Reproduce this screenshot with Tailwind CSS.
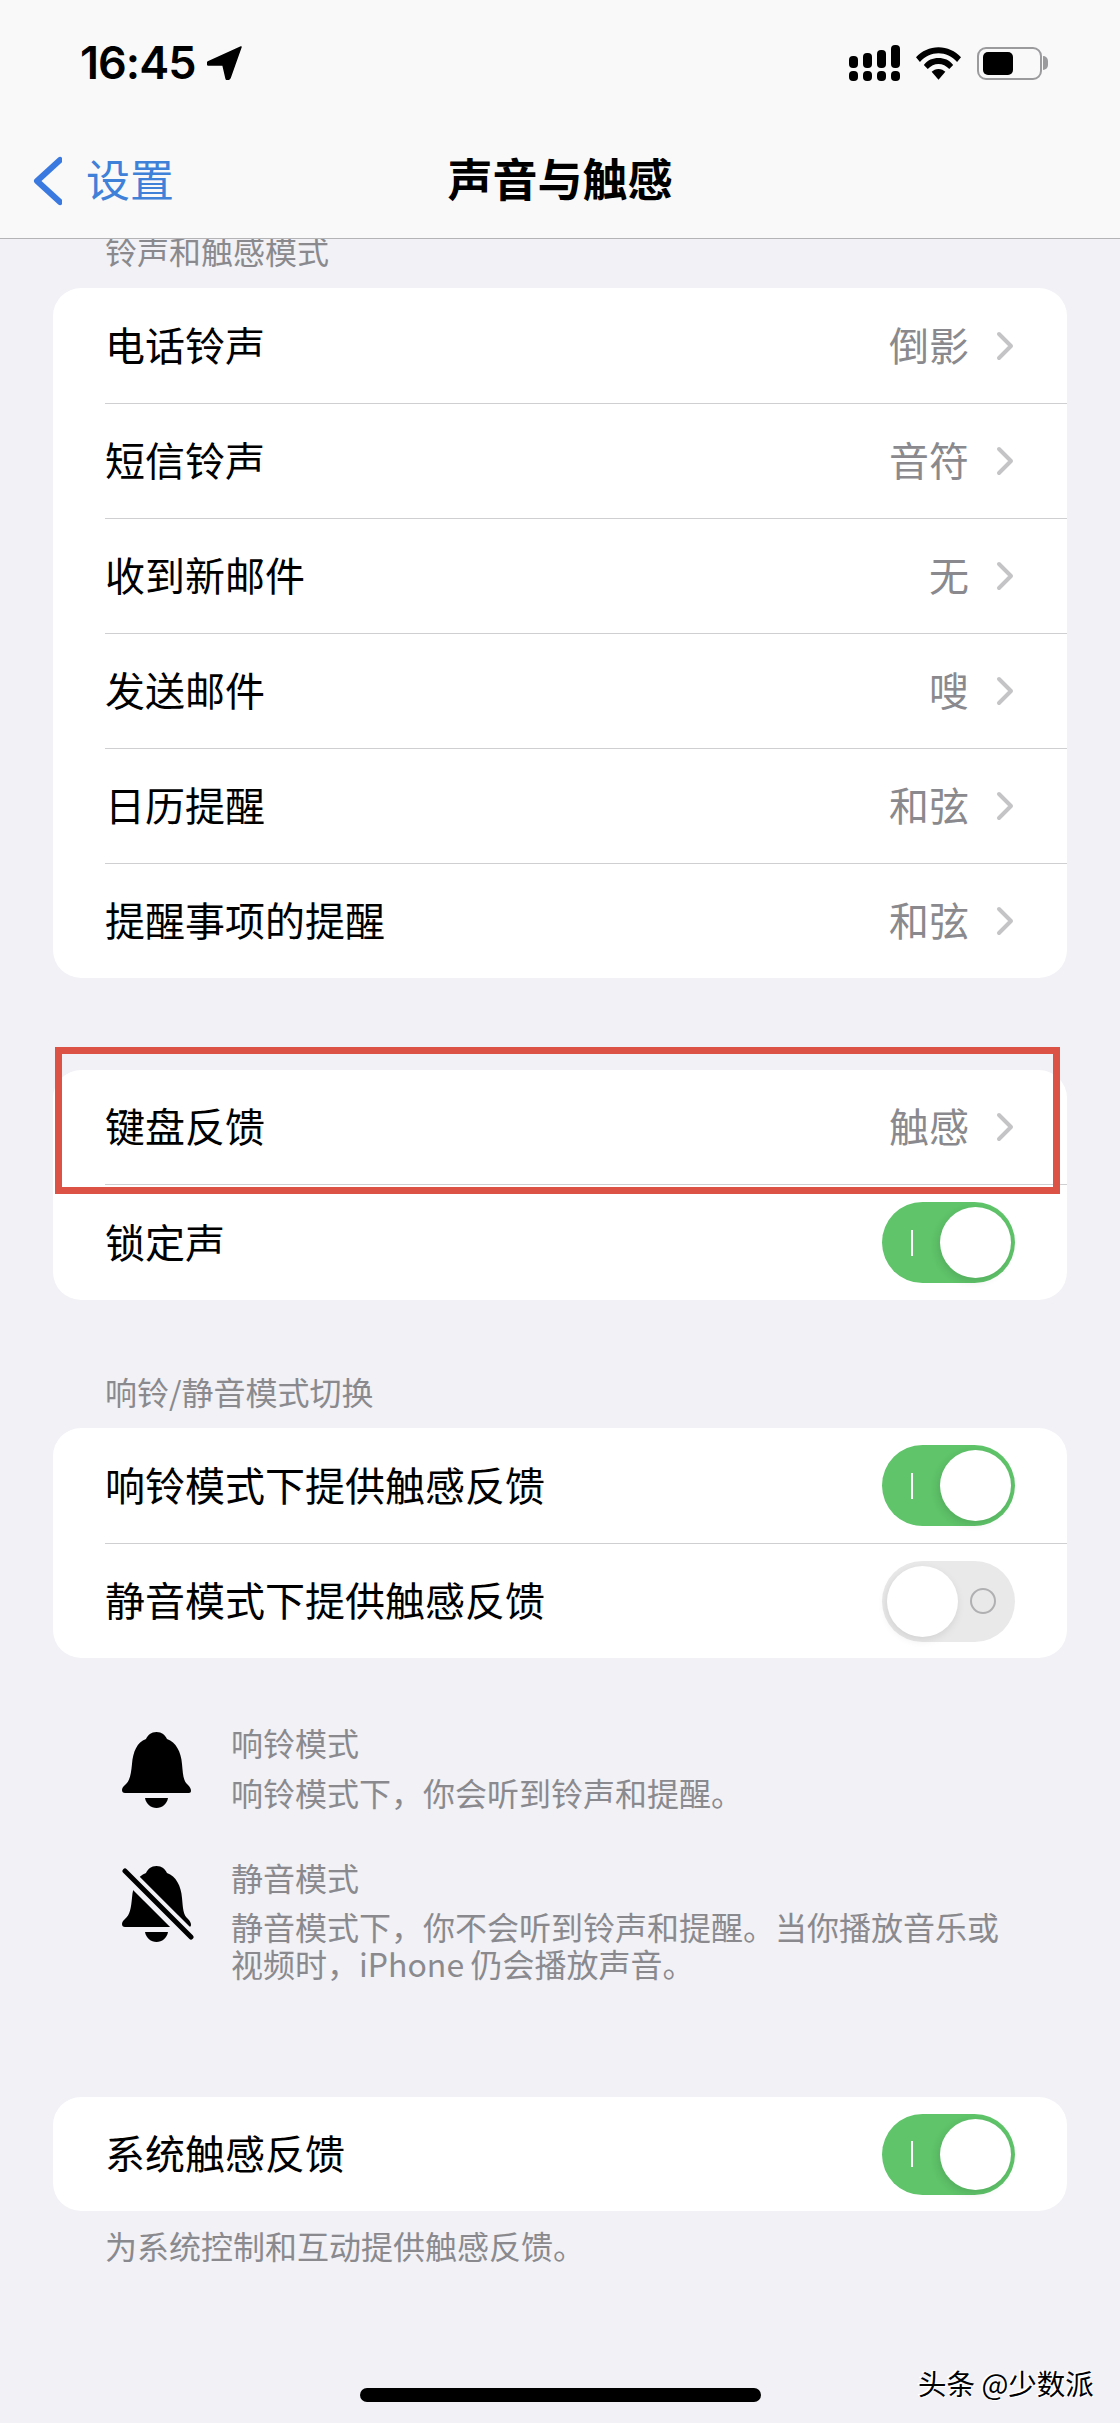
<!DOCTYPE html>
<html>
  <head>
    <meta name="viewport" content="width=device-width, initial-scale=1" />
    <title>声音与触感</title>
    <script src="https://cdn.jsdelivr.net/npm/@tailwindcss/browser@4"></script>
  </head>
  <body>
    <div class="relative w-[1120px] h-[2423px] overflow-hidden bg-[#f1f1f6] text-black" style='font-family: "Noto Sans CJK SC", "Noto Sans", sans-serif;'>
      <!-- Nav -->
      <div class="relative z-10 h-[239px] bg-[#f9f9fa] border-b border-[#b4b4b6]">
        <div class="flex items-center justify-between h-[36px] pt-[45px] pl-[80px] pr-[72px] box-content">
          <div class="flex items-center gap-[12px]">
            <span class="text-[45px] leading-[34px] font-semibold tracking-[-1px]" style='font-family: Inter, sans-serif;'>16:45</span>
            <svg class="w-[36px] h-[34px]" viewBox="0 0 36 34"><path d="M34 1 L1 16 C0 17 0 19 2 19 L16 19 L19 32 C19 34 22 34 23 32 Z" fill="#000" stroke="#000" stroke-width="1.5" stroke-linejoin="round"/></svg>
          </div>
          <div class="flex items-center gap-[15px]">
            <svg class="w-[52px] h-[36px]" viewBox="0 0 52 36" fill="#000">
              <rect x="0" y="11" width="9" height="12" rx="4"/><rect x="0" y="26" width="9" height="10" rx="4"/>
              <rect x="14" y="8" width="9" height="15" rx="4"/><rect x="14" y="26" width="9" height="10" rx="4"/>
              <rect x="28" y="5" width="9" height="18" rx="4"/><rect x="28" y="26" width="9" height="10" rx="4"/>
              <rect x="42" y="0" width="9" height="23" rx="4"/><rect x="42" y="26" width="9" height="10" rx="4"/>
            </svg>
            <svg class="w-[45px] h-[33px]" viewBox="0 0 46 33" fill="#000">
              <path d="M23 0 C32 0 40 4 46 10 L42 15 C37 9 30 6 23 6 C16 6 9 9 4 15 L0 10 C6 4 14 0 23 0Z"/>
              <path d="M23 11 C29 11 34 13 38 18 L34 22 C31 19 27 17 23 17 C19 17 15 19 12 22 L8 18 C12 13 17 11 23 11Z"/>
              <path d="M23 22 C26 22 28 23 30 25 L23 33 L16 25 C18 23 20 22 23 22Z"/>
            </svg>
            <div class="flex items-center gap-[1px] ml-[1px]">
              <div class="flex items-center w-[65px] h-[33px] pl-[4px] rounded-[9px] border-2 border-[#9b9b9d]">
                <div class="w-[30px] h-[23px] rounded-[5px] bg-black"></div>
              </div>
              <div class="w-[5px] h-[14px] rounded-r-full bg-[#9b9b9d]"></div>
            </div>
          </div>
        </div>
        <div class="relative flex items-center justify-center mt-[67px] h-[60px]">
          <div class="absolute left-[32px] top-[0px] flex items-center gap-[24px] text-[#3f80d8]">
            <svg class="w-[30px] h-[50px] mt-[6px]" viewBox="0 0 30 50"><path d="M28 4 L5 25 L28 46" fill="none" stroke="#3a7ae0" stroke-width="6" stroke-linecap="round" stroke-linejoin="round"/></svg>
            <span class="text-[44px] leading-[60px]">设置</span>
          </div>
          <span class="text-[45px] leading-[60px] font-semibold">声音与触感</span>
        </div>
      </div>

      <!-- 铃声和触感模式 -->
      <div class="h-[49px] pl-[105px] text-[32px] leading-[38px] text-[#8a8a8e] -mt-[8px]">铃声和触感模式</div>
      <div class="mx-[53px] mt-[8px] rounded-[28px] bg-white overflow-hidden">
        <div class="flex items-center justify-between h-[115px] pl-[52px] pr-[53px] text-[40px]">
          <span class="pb-[4px]">电话铃声</span>
          <div class="flex items-center gap-[27px] text-[#8a8a8e]"><span class="pb-[4px]">倒影</span><svg class="w-[18px] h-[30px]" viewBox="0 0 18 30"><path d="M3 3 L15 15 L3 27" fill="none" stroke="#c4c4c7" stroke-width="4" stroke-linecap="round" stroke-linejoin="round"/></svg></div>
        </div>
        <div class="ml-[52px] h-px bg-[#cfcfd2]"></div>
        <div class="flex items-center justify-between h-[114px] pl-[52px] pr-[53px] text-[40px]">
          <span class="pb-[4px]">短信铃声</span>
          <div class="flex items-center gap-[27px] text-[#8a8a8e]"><span class="pb-[4px]">音符</span><svg class="w-[18px] h-[30px]" viewBox="0 0 18 30"><path d="M3 3 L15 15 L3 27" fill="none" stroke="#c4c4c7" stroke-width="4" stroke-linecap="round" stroke-linejoin="round"/></svg></div>
        </div>
        <div class="ml-[52px] h-px bg-[#cfcfd2]"></div>
        <div class="flex items-center justify-between h-[114px] pl-[52px] pr-[53px] text-[40px]">
          <span class="pb-[4px]">收到新邮件</span>
          <div class="flex items-center gap-[27px] text-[#8a8a8e]"><span class="pb-[4px]">无</span><svg class="w-[18px] h-[30px]" viewBox="0 0 18 30"><path d="M3 3 L15 15 L3 27" fill="none" stroke="#c4c4c7" stroke-width="4" stroke-linecap="round" stroke-linejoin="round"/></svg></div>
        </div>
        <div class="ml-[52px] h-px bg-[#cfcfd2]"></div>
        <div class="flex items-center justify-between h-[114px] pl-[52px] pr-[53px] text-[40px]">
          <span class="pb-[4px]">发送邮件</span>
          <div class="flex items-center gap-[27px] text-[#8a8a8e]"><span class="pb-[4px]">嗖</span><svg class="w-[18px] h-[30px]" viewBox="0 0 18 30"><path d="M3 3 L15 15 L3 27" fill="none" stroke="#c4c4c7" stroke-width="4" stroke-linecap="round" stroke-linejoin="round"/></svg></div>
        </div>
        <div class="ml-[52px] h-px bg-[#cfcfd2]"></div>
        <div class="flex items-center justify-between h-[114px] pl-[52px] pr-[53px] text-[40px]">
          <span class="pb-[4px]">日历提醒</span>
          <div class="flex items-center gap-[27px] text-[#8a8a8e]"><span class="pb-[4px]">和弦</span><svg class="w-[18px] h-[30px]" viewBox="0 0 18 30"><path d="M3 3 L15 15 L3 27" fill="none" stroke="#c4c4c7" stroke-width="4" stroke-linecap="round" stroke-linejoin="round"/></svg></div>
        </div>
        <div class="ml-[52px] h-px bg-[#cfcfd2]"></div>
        <div class="flex items-center justify-between h-[114px] pl-[52px] pr-[53px] text-[40px]">
          <span class="pb-[4px]">提醒事项的提醒</span>
          <div class="flex items-center gap-[27px] text-[#8a8a8e]"><span class="pb-[4px]">和弦</span><svg class="w-[18px] h-[30px]" viewBox="0 0 18 30"><path d="M3 3 L15 15 L3 27" fill="none" stroke="#c4c4c7" stroke-width="4" stroke-linecap="round" stroke-linejoin="round"/></svg></div>
        </div>
      </div>

      <!-- 键盘反馈 / 锁定声 -->
      <div class="mx-[53px] mt-[92px] rounded-[28px] bg-white overflow-hidden">
        <div class="flex items-center justify-between h-[114px] pl-[52px] pr-[53px] text-[40px]">
          <span class="pb-[4px]">键盘反馈</span>
          <div class="flex items-center gap-[27px] text-[#8a8a8e]"><span class="pb-[4px]">触感</span><svg class="w-[18px] h-[30px]" viewBox="0 0 18 30"><path d="M3 3 L15 15 L3 27" fill="none" stroke="#c4c4c7" stroke-width="4" stroke-linecap="round" stroke-linejoin="round"/></svg></div>
        </div>
        <div class="ml-[52px] h-px bg-[#cfcfd2]"></div>
        <div class="flex items-center justify-between h-[115px] pl-[52px] pr-[52px] text-[40px]">
          <span class="pb-[4px]">锁定声</span>
          <div class="flex items-center justify-between w-[133px] h-[81px] pl-[29px] pr-[4px] rounded-full bg-[#5fc46a]"><div class="w-[2px] h-[26px] bg-white"></div><div class="w-[71px] h-[71px] rounded-full bg-white shadow-[-2px_3px_8px_rgba(0,0,0,0.12)]"></div></div>
        </div>
      </div>

      <!-- 红框 -->
      <div class="absolute left-[55px] top-[1047px] w-[1005px] h-[147px] border-[7px] border-[#dc5345]"></div>

      <!-- 响铃/静音模式切换 -->
      <div class="h-[128px] pl-[105px] pt-[72px] text-[32px] leading-[38px] text-[#8a8a8e]">响铃/静音模式切换</div>
      <div class="mx-[53px] rounded-[28px] bg-white overflow-hidden">
        <div class="flex items-center justify-between h-[115px] pl-[52px] pr-[52px] text-[40px]">
          <span class="pb-[4px]">响铃模式下提供触感反馈</span>
          <div class="flex items-center justify-between w-[133px] h-[81px] pl-[29px] pr-[4px] rounded-full bg-[#5fc46a]"><div class="w-[2px] h-[26px] bg-white"></div><div class="w-[71px] h-[71px] rounded-full bg-white shadow-[-2px_3px_8px_rgba(0,0,0,0.12)]"></div></div>
        </div>
        <div class="ml-[52px] h-px bg-[#cfcfd2]"></div>
        <div class="flex items-center justify-between h-[114px] pl-[52px] pr-[52px] text-[40px]">
          <span class="pb-[4px]">静音模式下提供触感反馈</span>
          <div class="flex items-center justify-between w-[133px] h-[81px] pl-[5px] pr-[19px] rounded-full bg-[#e9e9ea]"><div class="w-[71px] h-[71px] rounded-full bg-white shadow-[-1px_3px_8px_rgba(0,0,0,0.1)]"></div><div class="w-[26px] h-[26px] rounded-full border-2 border-[#b0b0b2]"></div></div>
        </div>
      </div>

      <!-- 模式说明 -->
      <div class="h-[439px] pt-[65px] text-[32px] leading-[38px] text-[#8a8a8e]">
        <div class="flex">
          <div class="w-[231px] pl-[122px] pt-[9px]">
            <svg class="w-[72px] h-[76px]" viewBox="0 0 72 76" fill="#000">
              <path d="M34.5 0 C40 0 43 3 45 7 C54 10 59 20 60 32 C61 42 61 49 66 53 C68 55 69 57 69 59 C69 61 67 61 66 61 L3 61 C1 61 0 60 0 58 C0 56 1 55 3 53 C8 49 9 42 10 32 C11 20 15 10 24 7 C26 3 29 0 34.5 0Z"/>
              <path d="M23 66 H46 C45 72 40 76 34.5 76 C29 76 24 72 23 66Z"/>
            </svg>
          </div>
          <div>
            <div>响铃模式</div>
            <div class="mt-[12px]">响铃模式下，你会听到铃声和提醒。</div>
          </div>
        </div>
        <div class="flex mt-[47px]">
          <div class="w-[231px] pl-[122px] pt-[8px]">
            <svg class="w-[72px] h-[76px]" viewBox="0 0 72 76" fill="#000">
              <path d="M34.5 0 C40 0 43 3 45 7 C54 10 59 20 60 32 C61 42 61 49 66 53 C68 55 69 57 69 59 C69 61 67 61 66 61 L3 61 C1 61 0 60 0 58 C0 56 1 55 3 53 C8 49 9 42 10 32 C11 20 15 10 24 7 C26 3 29 0 34.5 0Z"/>
              <path d="M23 66 H46 C45 72 40 76 34.5 76 C29 76 24 72 23 66Z"/>
              <path d="M-2 1 L72 75" stroke="#f1f1f6" stroke-width="14" fill="none"/>
              <path d="M3 5 L69 71" stroke="#000" stroke-width="5" stroke-linecap="round" fill="none"/>
            </svg>
          </div>
          <div class="w-[780px]">
            <div>静音模式</div>
            <div class="mt-[12px] leading-[37px]">静音模式下，你不会听到铃声和提醒。当你播放音乐或视频时，iPhone&thinsp;仍会播放声音。</div>
          </div>
        </div>
      </div>

      <!-- 系统触感反馈 -->
      <div class="mx-[53px] rounded-[28px] bg-white overflow-hidden">
        <div class="flex items-center justify-between h-[114px] pl-[52px] pr-[52px] text-[40px]">
          <span class="pb-[4px]">系统触感反馈</span>
          <div class="flex items-center justify-between w-[133px] h-[81px] pl-[29px] pr-[4px] rounded-full bg-[#5fc46a]"><div class="w-[2px] h-[26px] bg-white"></div><div class="w-[71px] h-[71px] rounded-full bg-white shadow-[-2px_3px_8px_rgba(0,0,0,0.12)]"></div></div>
        </div>
      </div>
      <div class="pl-[105px] pt-[15px] text-[32px] leading-[38px] text-[#8a8a8e]">为系统控制和互动提供触感反馈。</div>

      <!-- Home indicator, watermark -->
      <div class="absolute left-[360px] top-[2388px] w-[401px] h-[14px] rounded-full bg-black"></div>
      <div class="absolute left-[918px] top-[2363px] text-[28.5px] leading-[40px] text-black [text-shadow:-2px_-1px_0_#fff,1px_1px_0_#fff]">头条 @少数派</div>
    </div>
  </body>
</html>
